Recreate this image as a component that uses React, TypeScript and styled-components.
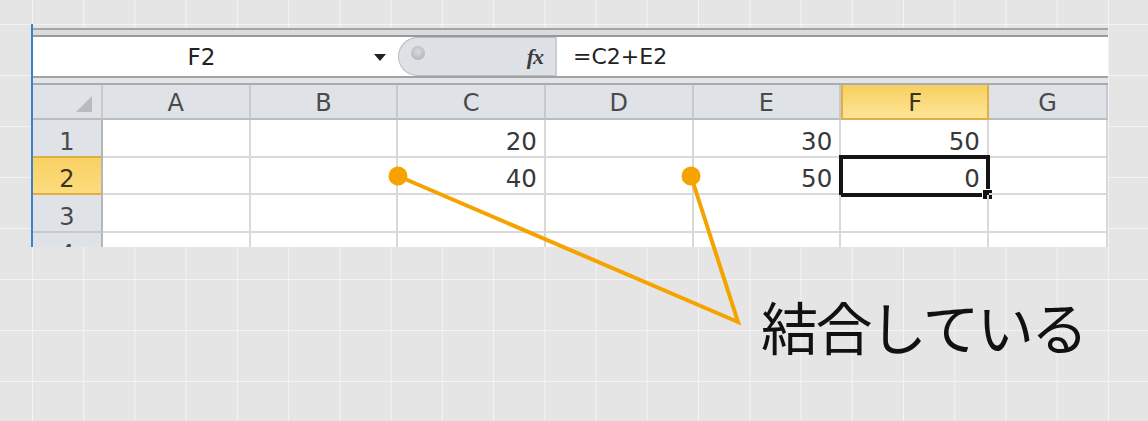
import styled, { createGlobalStyle } from "styled-components";

const GlobalStyle = createGlobalStyle`
  html, body {
    margin: 0;
    padding: 0;
  }
  body {
    font-family: "DejaVu Sans", "Noto Sans CJK JP", sans-serif;
  }
`;

const columns = ["A", "B", "C", "D", "E", "F", "G"];

type Row = { label: string; values: Record<string, string> };

const rows: Row[] = [
  { label: "1", values: { C: "20", E: "30", F: "50" } },
  { label: "2", values: { C: "40", E: "50", F: "0" } },
  { label: "3", values: {} },
  { label: "4", values: {} },
];

const activeCol = "F";
const activeRow = "2";

export default function App() {
  return (
    <>
      <GlobalStyle />
      <Page>
        <Sheet>
          <TopStrip />
          <FormulaBar>
            <NameBox>
              <NameText>F2</NameText>
              <DropArrow />
            </NameBox>
            <FxArea>
              <FxDot />
              <FxLabel>fx</FxLabel>
            </FxArea>
            <FormulaInput>=C2+E2</FormulaInput>
          </FormulaBar>
          <Divider />
          <Grid>
            <CornerCell>
              <CornerTriangle />
            </CornerCell>
            {columns.map((c) => (
              <ColHeader key={c} $active={c === activeCol}>
                {c}
              </ColHeader>
            ))}
            {rows.map((r) => (
              <RowGroup key={r.label} row={r} />
            ))}
          </Grid>
        </Sheet>
        <Caption>結合している</Caption>
        <Annotation viewBox="0 0 1148 421">
          <polyline
            points="398,176 738,322 691,176"
            fill="none"
            stroke="#f5a300"
            strokeWidth="4"
            strokeLinejoin="miter"
          />
          <circle cx="398" cy="176" r="9.5" fill="#f6a300" />
          <circle cx="691" cy="176" r="9.5" fill="#f6a300" />
        </Annotation>
      </Page>
    </>
  );
}

const RowGroup = ({ row }: { row: Row }) => (
  <>
    <RowHeader $active={row.label === activeRow}>{row.label}</RowHeader>
    {columns.map((c) => (
      <Cell key={c}>
        {row.values[c]}
        {c === activeCol && row.label === activeRow && (
          <Selection>
            <Handle />
          </Selection>
        )}
      </Cell>
    ))}
  </>
);

const Page = styled.div`
  position: relative;
  width: 1148px;
  height: 421px;
  overflow: hidden;
  padding-top: 24px;
  box-sizing: border-box;
  background-color: #e5e5e5;
  background-image: linear-gradient(
      to right,
      rgba(255, 255, 255, 0.55) 1px,
      transparent 1px
    ),
    linear-gradient(to bottom, rgba(255, 255, 255, 0.55) 1px, transparent 1px);
  background-size: 51.24px 51px;
  background-position: 32px 24px;
`;

const Sheet = styled.div`
  margin-left: 31px;
  width: 1075px;
  height: 223px;
  overflow: hidden;
  border-left: 2px solid #3d82c8;
`;

const TopStrip = styled.div`
  height: 13px;
  background: linear-gradient(
    to bottom,
    transparent 0 4px,
    #a3a5a8 4px 6px,
    #d9dbde 6px 11px,
    #97999c 11px 13px
  );
`;

const FormulaBar = styled.div`
  display: flex;
  height: 39px;
  background: #ffffff;
`;

const NameBox = styled.div`
  display: flex;
  align-items: center;
  width: 365px;
  padding-right: 12px;
  box-sizing: border-box;
`;

const NameText = styled.span`
  flex: 1;
  text-align: center;
  font-size: 23px;
  color: #222;
  margin-right: 4px;
`;

const DropArrow = styled.span`
  width: 0;
  height: 0;
  border-left: 6px solid transparent;
  border-right: 6px solid transparent;
  border-top: 7px solid #222;
  margin-top: 2px;
`;

const FxArea = styled.div`
  display: flex;
  align-items: center;
  justify-content: space-between;
  width: 157px;
  padding: 0 12px 0 12px;
  box-sizing: border-box;
  background: #dee2e7;
  border: 1px solid #b8bcc1;
  border-right: none;
  border-radius: 20px 0 0 20px;
`;

const FxDot = styled.span`
  width: 14px;
  height: 14px;
  border-radius: 50%;
  margin-top: -8px;
  background: radial-gradient(circle at 50% 40%, #d9dbdd 0%, #a9acb0 100%);
  filter: blur(0.7px);
`;

const FxLabel = styled.span`
  font-family: "Liberation Serif", "DejaVu Serif", serif;
  font-style: italic;
  font-weight: bold;
  font-size: 22px;
  color: #3c3c3c;
  letter-spacing: -1px;
`;

const FormulaInput = styled.div`
  flex: 1;
  display: flex;
  align-items: center;
  padding-left: 16px;
  border-left: 2px solid #c9ccd0;
  font-size: 22px;
  color: #222;
`;

const Divider = styled.div`
  height: 9px;
  background: linear-gradient(
    to bottom,
    #a0a3a6 0 2px,
    #e3e5e8 2px 7px,
    #a9acaf 7px 9px
  );
`;

const Grid = styled.div`
  display: grid;
  grid-template-columns: 70px repeat(6, 147.67px) 1fr;
  grid-template-rows: 35px;
  grid-auto-rows: 37.6px;
  background: #ffffff;
`;

const HeaderBase = styled.div`
  display: flex;
  align-items: center;
  justify-content: center;
  box-sizing: border-box;
  font-size: 24px;
  color: #4a4a4a;
  background: #dfe3e8;
  border-right: 2px solid #c6cacf;
  border-bottom: 2px solid #b9bdc2;
`;

const CornerCell = styled(HeaderBase)`
  align-items: flex-end;
  justify-content: flex-end;
  padding: 0 9px 6px 0;
`;

const CornerTriangle = styled.span`
  width: 0;
  height: 0;
  border-left: 16px solid transparent;
  border-bottom: 16px solid #b7bbc0;
`;

const ColHeader = styled(HeaderBase)<{ $active?: boolean }>`
  padding-top: 3px;
  ${({ $active }) =>
    $active &&
    `
    background: linear-gradient(to bottom, #f8cf5f, #fde596);
    border: 2px solid #dfae45;
    border-top: none;
    color: #3a3320;
  `}
`;

const RowHeader = styled(HeaderBase)<{ $active?: boolean }>`
  align-items: flex-end;
  line-height: 26px;
  padding-bottom: 1px;
  border-bottom: 2px solid #c6cacf;
  border-right: 2px solid #b2b6bb;
  ${({ $active }) =>
    $active &&
    `
    background: linear-gradient(to bottom, #f9d164, #fcdc7e);
    border-top: 2px solid #dfae45;
    border-bottom: 2px solid #dfae45;
    margin-top: -2px;
    color: #3a3320;
  `}
`;

const Cell = styled.div`
  position: relative;
  display: flex;
  align-items: flex-end;
  justify-content: flex-end;
  box-sizing: border-box;
  padding: 0 7px 1px 0;
  font-size: 24.5px;
  line-height: 26px;
  color: #383838;
  border-right: 2px solid #d9d9d9;
  border-bottom: 2px solid #d9d9d9;
`;

const Selection = styled.div`
  position: absolute;
  top: -3px;
  left: -2px;
  right: -3px;
  bottom: -4px;
  border: 4px solid #141414;
  pointer-events: none;
`;

const Handle = styled.span`
  position: absolute;
  right: -6px;
  bottom: -6px;
  width: 9px;
  height: 9px;
  background: #141414;
  border-left: 1px solid #ffffff;
  border-top: 1px solid #ffffff;
`;

const Caption = styled.div`
  margin-top: 50px;
  padding-left: 761px;
  font-family: "Noto Sans CJK JP", sans-serif;
  font-size: 57px;
  line-height: 57px;
  letter-spacing: -2.6px;
  color: #111;
`;

const Annotation = styled.svg`
  position: absolute;
  top: 0;
  left: 0;
  width: 1148px;
  height: 421px;
  pointer-events: none;
`;
